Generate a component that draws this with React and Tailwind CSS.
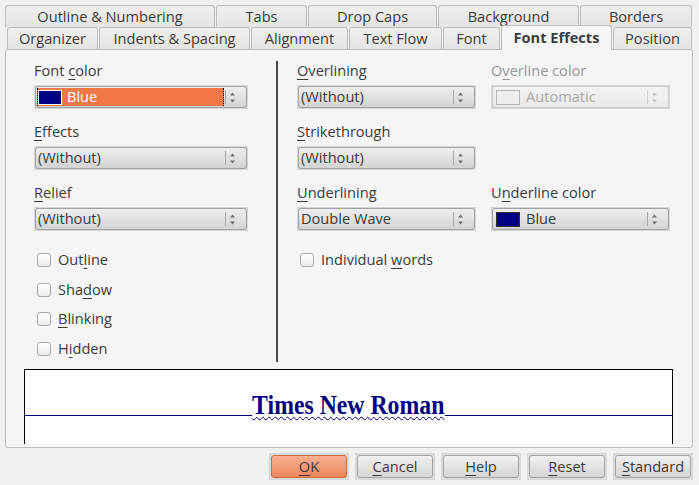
import React from "react";

const U = ({ children }) => (
  <span className="underline underline-offset-[3px] decoration-1">{children}</span>
);

const Arrows = ({ disabled }) => (
  <svg width="5" height="11" viewBox="0 0 5 11" className="ml-[4px] mr-[11px]">
    <polygon points="0,3.5 2.5,0.5 5,3.5" fill={disabled ? "#c4c4c4" : "#707070"} />
    <polygon points="0,7.5 2.5,10.5 5,7.5" fill={disabled ? "#c4c4c4" : "#707070"} />
  </svg>
);

// listbox with the little spinner on its right
const Combo = ({ className = "", disabled = false, children }) => (
  <div className={`h-[24px] p-px bg-[#d6d6d6] ${className}`}>
    <div
      className={`h-full rounded-[3px] border flex items-stretch ${
        disabled
          ? "border-[#cdcdcd] bg-linear-to-b from-[#f3f3f3] to-[#e9e9e9] text-[#a9a9a9]"
          : "border-[#a2a2a2] bg-linear-to-b from-[#efefef] to-[#d3d3d3] text-[#3c3c3c]"
      }`}
    >
      <div className="flex-1 min-w-0 flex items-center p-px">{children}</div>
      <div className="flex items-center">
        <div className={`w-px h-[14px] ${disabled ? "bg-[#d2d2d2]" : "bg-[#a9a9a9]"}`} />
        <Arrows disabled={disabled} />
      </div>
    </div>
  </div>
);

const Field = ({ label, disabled, children, className = "" }) => (
  <div className={className}>
    <div className={`h-[20px] leading-[20px] mb-[5px] ${disabled ? "text-[#959595]" : "text-[#3c3c3c]"}`}>
      {label}
    </div>
    {children}
  </div>
);

const Check = ({ children, className = "" }) => (
  <div className={`h-[29.7px] flex items-center ${className}`}>
    <div className="w-[14px] h-[14px] rounded-[3px] border border-[#a9a9a9] bg-linear-to-b from-[#ffffff] to-[#ececec]" />
    <span className="ml-[7px] text-[#3c3c3c]">{children}</span>
  </div>
);

const Tab = ({ w, children }) => (
  <div
    className={`${w} h-[22px] rounded-t-[3px] border border-b-0 border-[#bdbdbd] bg-linear-to-b from-[#efefee] to-[#e4e4e3] flex items-center justify-center text-[#3c3c3c]`}
  >
    {children}
  </div>
);

const Btn = ({ primary, children }) => (
  <div className="w-[80px] h-[27px] p-[2px] bg-[#d9d9d9]">
    <div
      className={`h-full rounded-[3px] border flex items-center justify-center text-[#3c3c3c] ${
        primary
          ? "border-[#c96d47] bg-linear-to-b from-[#f8b192] to-[#ee8559]"
          : "border-[#a6a6a6] bg-linear-to-b from-[#f1f1f1] to-[#d5d5d5]"
      }`}
    >
      {children}
    </div>
  </div>
);

export default function App() {
  return (
    <div className="w-[699px] h-[485px] bg-[#f2f1f0] pt-[5px] overflow-hidden font-['Open_Sans',sans-serif] text-[14.6px] text-[#3c3c3c] select-none">
      {/* Tab rows */}
      <div className="flex gap-px ml-[5px] h-[22px]">
        <Tab w="w-[210px]">Outline &amp; Numbering</Tab>
        <Tab w="w-[91px]">Tabs</Tab>
        <Tab w="w-[129px]">Drop Caps</Tab>
        <Tab w="w-[141px]">Background</Tab>
        <Tab w="w-[112px]">Borders</Tab>
      </div>
      <div className="flex gap-px ml-[7px] h-[22px] items-end relative z-10">
        <Tab w="w-[91px]">Organizer</Tab>
        <Tab w="w-[151px]">Indents &amp; Spacing</Tab>
        <Tab w="w-[97px]">Alignment</Tab>
        <Tab w="w-[93px]">Text Flow</Tab>
        <Tab w="w-[57px]">Font</Tab>
        <div className="w-[111px] h-[25px] -mb-px rounded-t-[3px] border border-b-0 border-[#bdbdbd] bg-[#f5f5f5] flex items-center justify-center font-bold text-[#3c3c3c]">
          Font Effects
        </div>
        <Tab w="w-[79px]">Position</Tab>
      </div>

      {/* Panel */}
      <div className="ml-[5px] w-[688px] h-[399px] border border-[#bdbdbd] rounded-[3px] bg-[#f5f5f5]">
        <div className="h-[319px] flex pt-[10px]">
          {/* Left column */}
          <div className="ml-[28px] w-[214px]">
            <Field label={<>Font <U>c</U>olor</>}>
              <Combo className="w-[214px]">
                <div className="h-full flex-1 flex items-center bg-[#f07746] border-x border-dotted border-black">
                  <div className="w-[24px] h-[15px] bg-[#000080] border border-white" />
                  <span className="ml-[5px] text-white">Blue</span>
                </div>
              </Combo>
            </Field>
            <Field className="mt-[12px]" label={<><U>E</U>ffects</>}>
              <Combo className="w-[214px]">
                <span className="pl-[1px]">(Without)</span>
              </Combo>
            </Field>
            <Field className="mt-[12px]" label={<><U>R</U>elief</>}>
              <Combo className="w-[214px]">
                <span className="pl-[1px]">(Without)</span>
              </Combo>
            </Field>
            <div className="mt-[14px] ml-[3px]">
              <Check>Out<U>l</U>ine</Check>
              <Check>Sha<U>d</U>ow</Check>
              <Check><U>B</U>linking</Check>
              <Check>H<U>i</U>dden</Check>
            </div>
          </div>

          {/* Separator */}
          <div className="ml-[28px] mt-[1px] w-[2px] h-[301px] bg-[#4a4a4a]" />

          {/* Right column */}
          <div className="ml-[19px]">
            <div className="grid grid-cols-[179px_179px] gap-x-[15px] gap-y-[12px]">
              <Field label={<><U>O</U>verlining</>}>
                <Combo className="w-[179px]">
                  <span className="pl-[1px]">(Without)</span>
                </Combo>
              </Field>
              <Field disabled label={<>O<U>v</U>erline color</>}>
                <Combo disabled className="w-[179px]">
                  <div className="ml-[2px] w-[24px] h-[15px] border border-[#b4b4b4] bg-[#ededed]" />
                  <span className="ml-[6px]">Automatic</span>
                </Combo>
              </Field>
              <Field label={<><U>S</U>trikethrough</>}>
                <Combo className="w-[179px]">
                  <span className="pl-[1px]">(Without)</span>
                </Combo>
              </Field>
              <div />
              <Field label={<><U>U</U>nderlining</>}>
                <Combo className="w-[179px]">
                  <span className="pl-[1px]">Double Wave</span>
                </Combo>
              </Field>
              <Field label={<>U<U>n</U>derline color</>}>
                <Combo className="w-[179px]">
                  <div className="ml-[2px] w-[24px] h-[15px] border border-[#333333] bg-[#000080]" />
                  <span className="ml-[6px]">Blue</span>
                </Combo>
              </Field>
            </div>
            <div className="mt-[14px] ml-[3px]">
              <Check>Individual <U>w</U>ords</Check>
            </div>
          </div>
        </div>

        {/* Preview */}
        <div className="ml-[18px] w-[649px] h-[75px] border-t border-x border-black bg-white relative overflow-hidden">
          <div className="absolute left-0 right-0 top-[45px] h-px bg-[#000080]" />
          <div className="pt-[20px] flex justify-center">
            <span className="relative bg-white leading-[31px] scale-x-[0.88] font-['Liberation_Serif',serif] font-bold text-[27px] text-[#000080] underline decoration-wavy decoration-[#000080] decoration-1 underline-offset-[2px]">
              Times New Roman
            </span>
          </div>
        </div>
      </div>

      {/* Buttons */}
      <div className="mt-[5px] ml-[269px] flex gap-[6px]">
        <Btn primary><U>O</U>K</Btn>
        <Btn><U>C</U>ancel</Btn>
        <Btn><U>H</U>elp</Btn>
        <Btn><U>R</U>eset</Btn>
        <Btn><U>S</U>tandard</Btn>
      </div>
    </div>
  );
}
